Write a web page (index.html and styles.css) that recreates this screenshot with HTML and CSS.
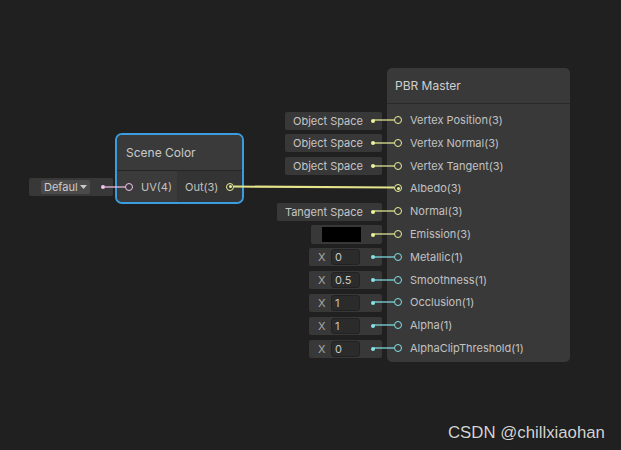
FILE: index.html
```html
<!DOCTYPE html>
<html>
<head>
<meta charset="utf-8">
<link rel="stylesheet" href="styles.css">
</head>
<body>
<div class="canvas">

  <div class="group scene-group">
    <div class="default-field">
      <div class="dropdown">Defaul<svg class="caret" width="7" height="4" viewBox="0 0 7 4"><path d="M0 0H7L3.5 4Z" fill="#c8c8c8"/></svg></div>
      <span class="dot v4"></span>
    </div>
    <div class="node selected">
      <div class="node-header">Scene Color</div>
      <div class="io-row">
        <div class="inputs">
          <span class="port v4"></span><span class="label">UV(4)</span>
        </div>
        <div class="outputs">
          <span class="label">Out(3)</span><span class="port v3 connected nowire"></span>
        </div>
      </div>
    </div>
  </div>

  <div class="group master-group">
    <div class="fields">
      <div class="field-row"><div class="field text-field">Object Space<span class="dot v3"></span></div></div>
      <div class="field-row"><div class="field text-field">Object Space<span class="dot v3"></span></div></div>
      <div class="field-row"><div class="field text-field">Object Space<span class="dot v3"></span></div></div>
      <div class="field-row"></div>
      <div class="field-row"><div class="field text-field">Tangent Space<span class="dot v3"></span></div></div>
      <div class="field-row"><div class="field color-field"><span class="swatch"></span><span class="dot v3"></span></div></div>
      <div class="field-row"><div class="field num-field"><span class="axis">X</span><span class="num">0</span><span class="dot v1"></span></div></div>
      <div class="field-row"><div class="field num-field"><span class="axis">X</span><span class="num">0.5</span><span class="dot v1"></span></div></div>
      <div class="field-row"><div class="field num-field"><span class="axis">X</span><span class="num">1</span><span class="dot v1"></span></div></div>
      <div class="field-row"><div class="field num-field"><span class="axis">X</span><span class="num">1</span><span class="dot v1"></span></div></div>
      <div class="field-row"><div class="field num-field"><span class="axis">X</span><span class="num">0</span><span class="dot v1"></span></div></div>
    </div>
    <div class="node master">
      <div class="node-header">PBR Master</div>
      <div class="ports">
        <div class="port-row"><span class="port v3"></span><span class="label">Vertex Position(3)</span></div>
        <div class="port-row"><span class="port v3"></span><span class="label">Vertex Normal(3)</span></div>
        <div class="port-row"><span class="port v3"></span><span class="label">Vertex Tangent(3)</span></div>
        <div class="port-row"><span class="port v3 connected nowire"></span><span class="label">Albedo(3)</span></div>
        <div class="port-row"><span class="port v3"></span><span class="label">Normal(3)</span></div>
        <div class="port-row"><span class="port v3"></span><span class="label">Emission(3)</span></div>
        <div class="port-row"><span class="port v1"></span><span class="label">Metallic(1)</span></div>
        <div class="port-row"><span class="port v1"></span><span class="label">Smoothness(1)</span></div>
        <div class="port-row"><span class="port v1"></span><span class="label">Occlusion(1)</span></div>
        <div class="port-row"><span class="port v1"></span><span class="label">Alpha(1)</span></div>
        <div class="port-row"><span class="port v1"></span><span class="label">AlphaClipThreshold(1)</span></div>
      </div>
    </div>
  </div>

  <svg class="edges" width="621" height="450" viewBox="0 0 621 450">
    <line x1="234" y1="186.5" x2="394" y2="187.5" stroke="#e4e48c" stroke-width="2"/>
  </svg>

  <div class="watermark">CSDN @chillxiaohan</div>
</div>
</body>
</html>
```

FILE: styles.css
```css
* { box-sizing: border-box; }

html, body {
  margin: 0;
  padding: 0;
  background: #202020;
}

body {
  width: 621px;
  height: 450px;
  overflow: hidden;
  font-family: "Inter", "Roboto", "DejaVu Sans", sans-serif;
  color: #c4c4c4;
}

.canvas {
  position: relative;
  width: 621px;
  height: 450px;
}

.group {
  position: absolute;
  display: flex;
  align-items: flex-start;
}

/* ---------- Scene Color group ---------- */
.scene-group {
  left: 29px;
  top: 133px;
  gap: 2px;
}

.default-field {
  margin-top: 45px;
  width: 84px;
  height: 18px;
  background: #383838;
  border-radius: 2px;
  display: flex;
  align-items: center;
  padding-left: 12px;
  padding-right: 8px;
}

.dropdown {
  width: 49px;
  height: 14px;
  background: #4a4a4a;
  border-radius: 2px;
  font-size: 11px;
  line-height: 14px;
  color: #cccccc;
  display: flex;
  align-items: center;
  padding-left: 3px;
  gap: 2px;
}

.caret { display: block; }

.default-field .dot { margin-left: auto; }

.node {
  background: #393939;
  border-radius: 6px;
  overflow: visible;
}

.node.selected {
  width: 129px;
  height: 71px;
  border: 2px solid #3a9ddf;
  border-radius: 7px;
}

.node.selected .node-header {
  height: 35px;
  padding-left: 9px;
  font-size: 12px;
  line-height: 36px;
  color: #cacaca;
  background: #3a3a3a;
  border-radius: 5px 5px 0 0;
}

.io-row {
  display: flex;
  height: 32px;
  border-top: 1px solid #262626;
}

.inputs {
  width: 60px;
  display: flex;
  align-items: center;
  padding-left: 8px;
  gap: 8px;
  background: #3b3b3b;
  border-radius: 0 0 0 5px;
}

.outputs {
  flex: 1;
  display: flex;
  align-items: center;
  padding-left: 8px;
  padding-right: 8px;
  justify-content: space-between;
  background: #343434;
  border-radius: 0 0 5px 0;
}

/* ---------- Master group ---------- */
.master-group {
  left: 276px;
  top: 68px;
  gap: 5px;
}

.fields {
  width: 106px;
  padding-top: 41.2px;
  display: flex;
  flex-direction: column;
}

.field-row {
  height: 22.8px;
  display: flex;
  align-items: center;
  justify-content: flex-end;
}

.field {
  flex: none;
  height: 18px;
  background: #383838;
  border-radius: 2px;
  display: flex;
  align-items: center;
  padding-right: 7px;
  font-size: 11px;
  color: #c6c6c6;
  white-space: nowrap;
}

.text-field {
  padding-left: 8px;
  gap: 8px;
}

.color-field {
  width: 71px;
  padding-left: 11px;
  height: 19px;
}

.swatch {
  width: 39px;
  height: 15px;
  background: #000;
}

.color-field .dot { margin-left: auto; }

.num-field {
  width: 73px;
  padding-left: 9px;
}

.axis {
  color: #a8a8a8;
  font-size: 11px;
  width: 13px;
}

.num {
  width: 29px;
  height: 16px;
  background: #2b2b2b;
  border: 1px solid #222222;
  border-radius: 3px;
  padding-left: 3px;
  line-height: 14px;
  font-size: 11px;
  color: #c8c8c8;
}

.num-field .dot { margin-left: auto; }

.node.master {
  width: 183px;
  height: 294px;
  border-radius: 5px;
}

.master .node-header {
  height: 36px;
  padding-left: 8px;
  font-size: 12px;
  line-height: 35px;
  color: #cfcfcf;
  border-bottom: 1px solid #2a2a2a;
}

.ports {
  padding-top: 4.6px;
}

.port-row {
  height: 22.8px;
  display: flex;
  align-items: center;
  padding-left: 7px;
  gap: 8px;
}

/* ---------- Ports ---------- */
.label {
  font-size: 11px;
  color: #c2c2c2;
  white-space: nowrap;
}

.v1 { color: #84e4e7; }
.v3 { color: #eef29a; }
.v4 { color: #f7c3ee; }

.port {
  position: relative;
  flex: none;
  width: 8px;
  height: 8px;
  border: 1.6px solid currentColor;
  border-radius: 50%;
}

.port::before {
  content: "";
  position: absolute;
  right: 100%;
  top: 50%;
  width: 20px;
  height: 2px;
  margin-top: -1px;
  margin-right: 1px;
  background: currentColor;
  opacity: 0.6;
}

.port.nowire::before { display: none; }

.port.connected::after {
  content: "";
  position: absolute;
  left: 50%;
  top: 50%;
  width: 3px;
  height: 3px;
  margin: -1.5px 0 0 -1.5px;
  border-radius: 50%;
  background: currentColor;
}

.dot {
  flex: none;
  width: 4px;
  height: 4px;
  border-radius: 50%;
  background: currentColor;
}

.edges {
  position: absolute;
  left: 0;
  top: 0;
  pointer-events: none;
}

.watermark {
  position: absolute;
  left: 448px;
  top: 423px;
  font-family: "Liberation Sans", Arial, sans-serif;
  font-size: 16.8px;
  color: #d4d4d4;
  text-shadow: 0 0 1px rgba(0, 0, 0, 0.6);
  white-space: nowrap;
}
```
